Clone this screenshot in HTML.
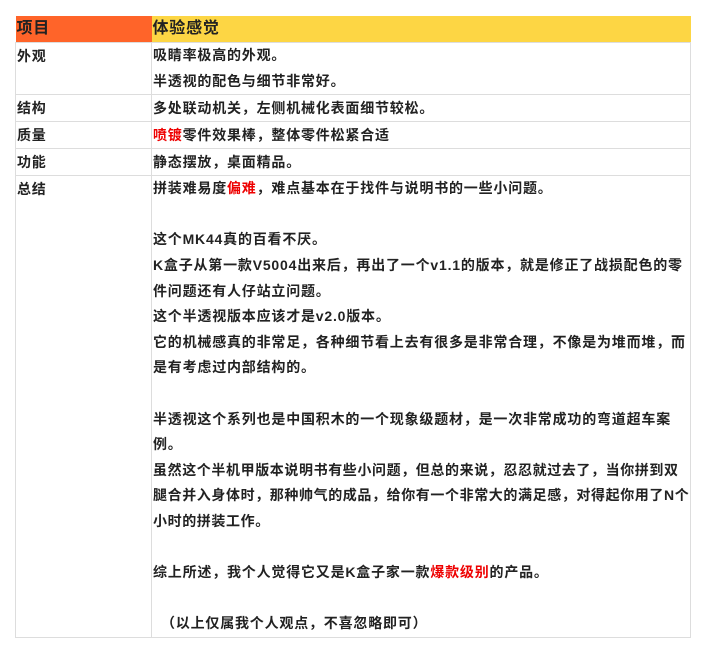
<!DOCTYPE html>
<html><head><meta charset="utf-8"><style>
body{margin:0;background:#fff;font-family:"Liberation Sans","Noto Sans CJK SC",sans-serif;font-weight:bold;color:#222;font-size:14px;letter-spacing:0.8px;}
table{position:absolute;left:15px;top:16px;width:676px;border-collapse:collapse;}
td{border:1px solid #ddd;vertical-align:top;padding:0 0 0 1px;line-height:26px;}
.h td{height:26px;font-size:16px;line-height:26px;border:none;}
.c1{width:135px;}
.r{color:#e00;}
p{margin:0;line-height:25.6px;}
</style></head><body>
<table>
<tr class="h"><td class="c1" style="background:#ff6429">项目</td><td style="background:#fdd644">体验感觉</td></tr>
<tr><td>外观</td><td style="height:51px"><p>吸睛率极高的外观。</p><p>半透视的配色与细节非常好。</p></td></tr>
<tr><td>结构</td><td>多处联动机关，左侧机械化表面细节较松。</td></tr>
<tr><td>质量</td><td><span class="r">喷镀</span>零件效果棒，整体零件松紧合适</td></tr>
<tr><td>功能</td><td>静态摆放，桌面精品。</td></tr>
<tr><td>总结</td><td style="height:455px">
<p>拼装难易度<span class="r">偏难</span>，难点基本在于找件与说明书的一些小问题。</p>
<p>&nbsp;</p>
<p>这个MK44真的百看不厌。</p>
<p>K盒子从第一款V5004出来后，再出了一个v1.1的版本，就是修正了战损配色的零件问题还有人仔站立问题。</p>
<p>这个半透视版本应该才是v2.0版本。</p>
<p>它的机械感真的非常足，各种细节看上去有很多是非常合理，不像是为堆而堆，而是有考虑过内部结构的。</p>
<p>&nbsp;</p>
<p>半透视这个系列也是中国积木的一个现象级题材，是一次非常成功的弯道超车案例。</p>
<p style="letter-spacing:0.6px">虽然这个半机甲版本说明书有些小问题，但总的来说，忍忍就过去了，当你拼到双腿合并入身体时，那种帅气的成品，给你有一个非常大的满足感，对得起你用了N个小时的拼装工作。</p>
<p>&nbsp;</p>
<p>综上所述，我个人觉得它又是K盒子家一款<span class="r">爆款级别</span>的产品。</p>
<p>&nbsp;</p>
<p style="padding-left:8px">（以上仅属我个人观点，不喜忽略即可）</p>
</td></tr>
</table>
</body></html>
